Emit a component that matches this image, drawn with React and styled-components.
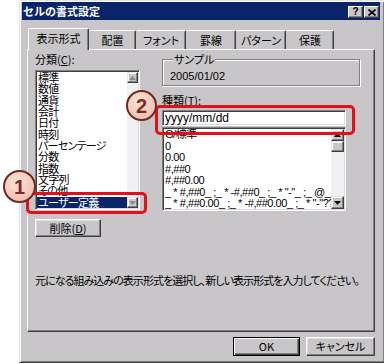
import React from 'react';
import styled, { createGlobalStyle } from 'styled-components';

const FONT_JP = `"Noto Sans CJK JP", "Noto Sans", sans-serif`;
const FONT_LAT = `"Liberation Sans", "Noto Sans CJK JP", sans-serif`;
const FACE = '#c8c6c9';

const GlobalStyle = createGlobalStyle`
  html, body { margin: 0; padding: 0; background: #fff; }
  body { font-family: ${FONT_JP}; }
  * { box-sizing: border-box; }
`;

const Page = styled.div`
  position: relative;
  width: 384px;
  height: 364px;
  overflow: hidden;
  padding-left: 19px;
`;

const Dialog = styled.div`
  width: 366px;
  height: 363px;
  background: ${FACE};
  border: 1px solid;
  border-color: #e6e5e7 #404040 #404040 #e6e5e7;
  box-shadow: inset 1px 1px 0 #fff, inset -1px -1px 0 #808080;
  padding: 1px 4px 0 2px;
  display: flex;
  flex-direction: column;
`;

const TitleBar = styled.div`
  height: 18px;
  background: #0a246a;
  display: flex;
  align-items: center;
  justify-content: space-between;
  padding: 0 1px 0 1px;
`;

const TitleText = styled.span`
  color: #fff;
  font: bold 11px/1 ${FONT_JP};
`;

const CaptionButtons = styled.div`
  display: flex;
  gap: 1px;
  margin-top: 2px;
`;

const CaptionButton = styled.div`
  width: 15px;
  height: 12px;
  background: ${FACE};
  border: 1px solid;
  border-color: #fff #404040 #404040 #fff;
  box-shadow: inset -1px -1px 0 #808080;
  display: flex;
  align-items: center;
  justify-content: center;
  font: bold 10px/1 ${FONT_LAT};
  color: #000;
`;

const TabStrip = styled.div`
  display: flex;
  align-items: flex-end;
  height: 21px;
  margin: 8px 0 0 6px;
  position: relative;
  z-index: 1;
`;

const Tab = styled.div`
  width: ${(p) => p.$w}px;
  height: ${(p) => (p.$active ? 22 : 19)}px;
  margin-bottom: ${(p) => (p.$active ? -1 : 0)}px;
  background: ${FACE};
  border-top: 1px solid #fff;
  border-left: 1px solid ${(p) => (p.$first || p.$active ? '#fff' : 'transparent')};
  border-right: 1px solid #404040;
  border-radius: 2px 2px 0 0;
  box-shadow: inset -1px 0 0 #808080;
  display: flex;
  align-items: center;
  justify-content: center;
  padding-bottom: ${(p) => (p.$active ? 2 : 0)}px;
  font: 11px/1 ${FONT_JP};
  font-feature-settings: "palt";
  color: #000;
`;

const Panel = styled.div`
  height: 283px;
  margin: 0 5px 0 5px;
  border: 1px solid;
  border-color: #fff #404040 #404040 #fff;
  box-shadow: inset -1px -1px 0 #808080;
  padding: 3px 7px 0 7px;
  display: flex;
  flex-direction: column;
`;

const Columns = styled.div`
  display: flex;
  gap: 22px;
  align-items: flex-start;
`;

const Column = styled.div`
  width: ${(p) => p.$w}px;
  display: flex;
  flex-direction: column;
`;

const FieldLabel = styled.div`
  font: 11px/12px ${FONT_JP};
  font-feature-settings: "palt";
  color: #000;
  margin-top: ${(p) => p.$mt || 0}px;
  u { text-decoration-thickness: 1px; text-underline-offset: 1px; }
`;

const ListBox = styled.div`
  width: ${(p) => p.$w}px;
  height: ${(p) => p.$h}px;
  margin-top: ${(p) => p.$mt || 0}px;
  background: #fff;
  border: 1px solid;
  border-color: #808080 #fff #fff #808080;
  box-shadow: inset 1px 1px 0 #404040, inset -1px -1px 0 #dcdadd;
  padding: 1px;
  display: flex;
`;

const ListItems = styled.div`
  flex: 1;
  min-width: 0;
  overflow: hidden;
`;

const ListItem = styled.div`
  height: ${(p) => p.$rh}px;
  line-height: ${(p) => p.$rh}px;
  font-size: 11px;
  font-family: ${(p) => (p.$latin ? FONT_LAT : FONT_JP)};
  font-feature-settings: "palt";
  letter-spacing: ${(p) => (p.$latin ? -0.45 : -0.7)}px;
  white-space: pre;
  padding-left: 1px;
  background: ${(p) => (p.$selected ? '#0a246a' : 'transparent')};
  color: ${(p) => (p.$selected ? '#fff' : '#000')};
`;

const ScrollBar = styled.div`
  width: ${(p) => p.$w}px;
  display: flex;
  flex-direction: column;
  background: #f1f0f2;
`;

const ScrollButton = styled.div`
  height: ${(p) => p.$h}px;
  flex: none;
  background: ${FACE};
  border: 1px solid;
  border-color: #e8e7e9 #404040 #404040 #e8e7e9;
  box-shadow: inset -1px -1px 0 #808080, inset 1px 1px 0 #fff;
  display: flex;
  align-items: center;
  justify-content: center;
`;

const ScrollTrack = styled.div`
  flex: 1;
`;

const RaisedButton = styled.div`
  width: ${(p) => p.$w}px;
  height: ${(p) => p.$h}px;
  margin-top: ${(p) => p.$mt || 0}px;
  background: ${FACE};
  border: 1px solid;
  border-color: ${(p) => (p.$default ? '#000' : '#fff #404040 #404040 #fff')};
  box-shadow: ${(p) =>
    p.$default
      ? 'inset 1px 1px 0 #fff, inset -1px -1px 0 #404040, inset -2px -2px 0 #808080'
      : 'inset -1px -1px 0 #808080, inset 1px 1px 0 #e2e1e3'};
  display: flex;
  align-items: center;
  justify-content: center;
  font: 11px/1 ${FONT_JP};
  font-feature-settings: "palt";
  color: #000;
  u { text-decoration-thickness: 1px; text-underline-offset: 1px; }
`;

const GroupBox = styled.fieldset`
  margin: 0;
  min-width: 0;
  border: 1px solid #808080;
  box-shadow: inset 1px 1px 0 #fff, 1px 1px 0 #fff;
  padding: 5px 7px 3px 7px;
`;

const GroupLegend = styled.legend`
  margin-left: 3px;
  padding: 0 1px;
  background: ${FACE};
  font: 11px/12px ${FONT_JP};
  font-feature-settings: "palt";
  color: #000;
`;

const SampleValue = styled.div`
  font: 11px/12px ${FONT_LAT};
  color: #000;
`;

const TextInput = styled.div`
  width: 184px;
  height: 16px;
  margin-top: 4px;
  background: #fff;
  border: 1px solid;
  border-color: #808080 #fff #fff #808080;
  box-shadow: inset 1px 1px 0 #404040, inset -1px -1px 0 #dcdadd;
  padding: 0 2px;
  font: 12px/14px ${FONT_LAT};
  color: #000;
  white-space: nowrap;
`;

const Description = styled.div`
  margin-top: 37px;
  font: 11px/13px ${FONT_JP};
  font-feature-settings: "palt";
  letter-spacing: -0.95px;
  white-space: nowrap;
  color: #000;
`;

const ButtonRow = styled.div`
  display: flex;
  justify-content: flex-end;
  gap: 6px;
  margin: 5px 5px 0 0;
`;

const Callout = styled.div`
  position: absolute;
  left: ${(p) => p.$x}px;
  top: ${(p) => p.$y}px;
  width: ${(p) => p.$w}px;
  height: ${(p) => p.$h}px;
  border: 3px solid #e3101b;
  border-radius: 5px;
  pointer-events: none;
`;

const StepBadge = styled.div`
  position: absolute;
  left: ${(p) => p.$x}px;
  top: ${(p) => p.$y}px;
  width: ${(p) => p.$d}px;
  height: ${(p) => p.$d}px;
  border-radius: 50%;
  border: 2px solid #6e2a20;
  background: radial-gradient(circle at 40% 35%, #fbe2d8 0%, #f1c4b3 70%, #e9b29f 100%);
  color: #7a2e22;
  font: bold 20px/1 ${FONT_LAT};
  display: flex;
  align-items: center;
  justify-content: center;
  padding-top: 1px;
`;

const Arrow = ({ dir, disabled }) => (
  <svg width="7" height="4" viewBox="0 0 7 4">
    <polygon
      points={dir === 'up' ? '3.5,0 7,4 0,4' : '0,0 7,0 3.5,4'}
      fill={disabled ? '#8a898c' : '#000'}
    />
  </svg>
);

const CloseGlyph = () => (
  <svg width="8" height="7" viewBox="0 0 8 7">
    <path d="M0.5 0.5 L7.5 6.5 M7.5 0.5 L0.5 6.5" stroke="#000" strokeWidth="1.6" />
  </svg>
);

const categories = [
  '標準', '数値', '通貨', '会計', '日付', '時刻', 'パーセンテージ',
  '分数', '指数', '文字列', 'その他', 'ユーザー定義',
];

const formats = [
  'G/標準',
  '0',
  '0.00',
  '#,##0',
  '#,##0.00',
  '_ * #,##0_ ;_ * -#,##0_ ;_ * "-"_ ;_ @_ ',
  '_ * #,##0.00_ ;_ * -#,##0.00_ ;_ * "-"??_ ;_ @_ ',
];

const tabs = [
  { label: '表示形式', w: 61, active: true },
  { label: '配置', w: 47 },
  { label: 'フォント', w: 50 },
  { label: '罫線', w: 50 },
  { label: 'パターン', w: 50 },
  { label: '保護', w: 48 },
];

export default function App() {
  return (
    <>
      <GlobalStyle />
      <Page>
        <Dialog>
          <TitleBar>
            <TitleText>セルの書式設定</TitleText>
            <CaptionButtons>
              <CaptionButton>?</CaptionButton>
              <CaptionButton><CloseGlyph /></CaptionButton>
            </CaptionButtons>
          </TitleBar>

          <TabStrip>
            {tabs.map((t, i) => (
              <Tab key={t.label} $w={t.w} $active={t.active} $first={i === 0}>
                {t.label}
              </Tab>
            ))}
          </TabStrip>

          <Panel>
            <Columns>
              <Column $w={105}>
                <FieldLabel>分類(<u>C</u>):</FieldLabel>
                <ListBox $w={105} $h={140} $mt={5}>
                  <ListItems>
                    {categories.map((c) => (
                      <ListItem key={c} $rh={136 / 12} $selected={c === 'ユーザー定義'}>
                        {c}
                      </ListItem>
                    ))}
                  </ListItems>
                  <ScrollBar $w={11}>
                    <ScrollButton $h={11}><Arrow dir="up" disabled /></ScrollButton>
                    <ScrollTrack />
                    <ScrollButton $h={11}><Arrow dir="down" disabled /></ScrollButton>
                  </ScrollBar>
                </ListBox>
                <RaisedButton $w={66} $h={18} $mt={9}>
                  削除(<u>D</u>)
                </RaisedButton>
              </Column>

              <Column $w={198}>
                <GroupBox>
                  <GroupLegend>サンプル</GroupLegend>
                  <SampleValue>2005/01/02</SampleValue>
                </GroupBox>
                <FieldLabel $mt={8}>種類(<u>T</u>):</FieldLabel>
                <TextInput>yyyy/mm/dd</TextInput>
                <ListBox $w={184} $h={84} $mt={1}>
                  <ListItems>
                    {formats.map((f) => (
                      <ListItem key={f} $rh={11.5} $latin>
                        {f}
                      </ListItem>
                    ))}
                  </ListItems>
                  <ScrollBar $w={13}>
                    <ScrollButton $h={12}><Arrow dir="up" /></ScrollButton>
                    <ScrollButton $h={11} />
                    <ScrollTrack />
                    <ScrollButton $h={13}><Arrow dir="down" /></ScrollButton>
                  </ScrollBar>
                </ListBox>
              </Column>
            </Columns>

            <Description>
              元になる組み込みの表示形式を選択し、新しい表示形式を入力してください。
            </Description>
          </Panel>

          <ButtonRow>
            <RaisedButton $w={67} $h={19} $default>OK</RaisedButton>
            <RaisedButton $w={69} $h={19}>キャンセル</RaisedButton>
          </ButtonRow>
        </Dialog>

        <Callout $x={26} $y={192} $w={121} $h={22} />
        <Callout $x={155} $y={105} $w={200} $h={30} />
        <StepBadge $x={3} $y={170} $d={33}>1</StepBadge>
        <StepBadge $x={126} $y={90} $d={31}>2</StepBadge>
      </Page>
    </>
  );
}
